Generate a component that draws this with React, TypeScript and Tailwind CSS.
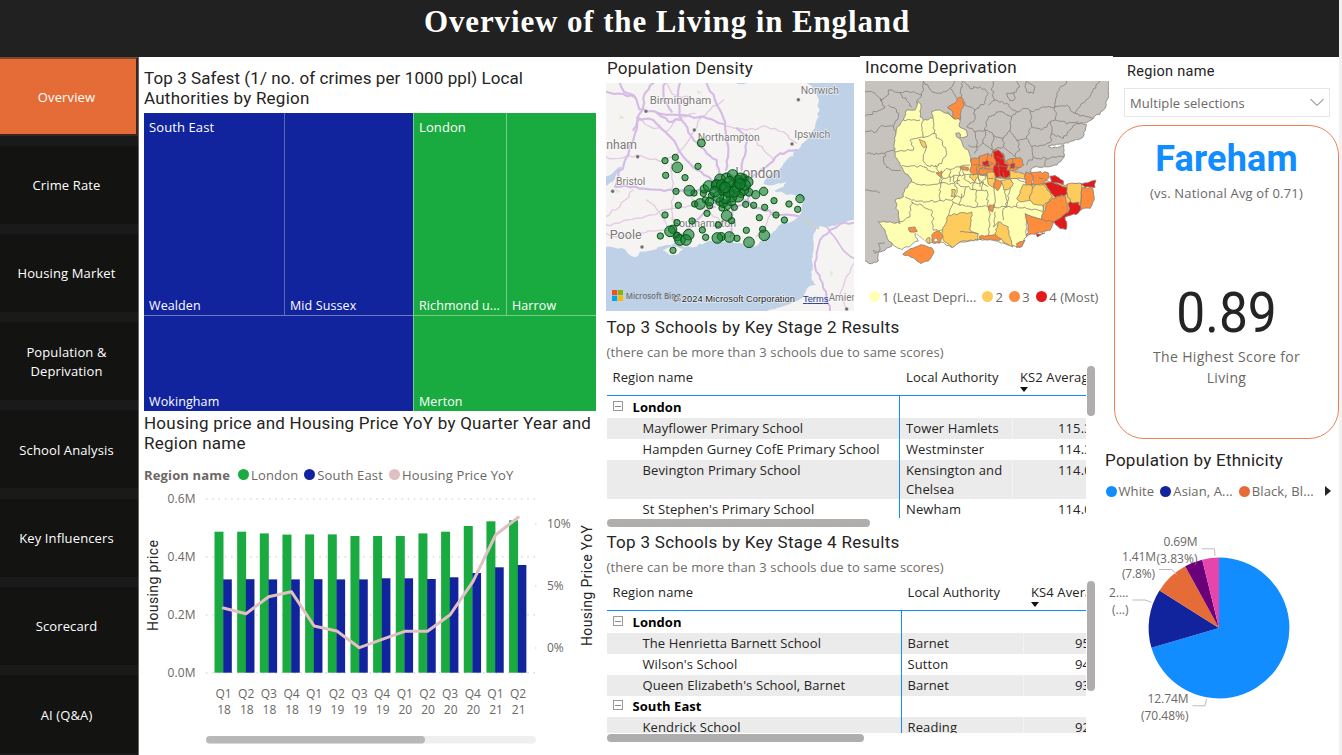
import React from "react";

const sans = "font-['Open_Sans','Noto_Sans',sans-serif]";
const din = "font-['Roboto','Open_Sans',sans-serif]";

/* ---------- irregular outlines ---------- */

type Pt = [number, number];

const parse = (s: string): Pt[] =>
  s.trim().split(/\s+/).map((p) => p.split(",").map(Number) as Pt);

const noise = (a: number, b: number, c: number) => {
  const v = Math.sin(a * 12.9898 + b * 78.233 + c * 37.719) * 43758.5453;
  return v - Math.floor(v) - 0.5;
};

// Subdivides each edge and shifts the new points, the same way in both directions,
// so that two areas with a common edge keep a common border.
function rough(s: string, closed: boolean, amp = 5.5, step = 8): string {
  const pts = parse(s);
  const out: Pt[] = [];
  const n = closed ? pts.length : pts.length - 1;
  for (let i = 0; i < n; i++) {
    const a = pts[i];
    const b = pts[(i + 1) % pts.length];
    const swap = a[0] > b[0] || (a[0] === b[0] && a[1] > b[1]);
    const [p, q] = swap ? [b, a] : [a, b];
    const len = Math.hypot(q[0] - p[0], q[1] - p[1]);
    const k = Math.max(1, Math.round(len / step));
    const seg: Pt[] = [];
    for (let j = 1; j < k; j++) {
      const t = j / k;
      seg.push([
        p[0] + (q[0] - p[0]) * t + noise(p[0] + j, q[1], p[1]) * amp,
        p[1] + (q[1] - p[1]) * t + noise(q[0], p[1] + j, q[1]) * amp,
      ]);
    }
    if (swap) seg.reverse();
    out.push(a, ...seg);
  }
  if (!closed) out.push(pts[pts.length - 1]);
  return "M" + out.map((p) => p[0].toFixed(1) + " " + p[1].toFixed(1)).join("L") + (closed ? "Z" : "");
}

/* ---------- sidebar ---------- */

const pages = [
  "Crime Rate",
  "Housing Market",
  "Population & Deprivation",
  "School Analysis",
  "Key Influencers",
  "Scorecard",
  "AI (Q&A)",
];

function Sidebar() {
  return (
    <nav className={`flex w-[139px] shrink-0 flex-col overflow-hidden border-r border-[#6b6763] bg-[#1a1a1a] text-[13px] leading-[19px] tracking-[0.13px] text-white ${sans}`}>
      <div className="flex h-[79px] shrink-0 items-center justify-center border-y-2 border-r-2 border-t-[#7a4730] border-r-[#3a261c] border-b-[#3a261c] bg-[#e66c37] pr-[3px] pt-[2px]">
        Overview
      </div>
      <div className="flex flex-col gap-[10.3px] pt-[9.5px]">
        {pages.map((p) => (
          <div key={p} className="flex h-[78px] shrink-0 items-center justify-center bg-[#131311] pl-4 pr-[21px] pt-[2px] text-center">
            {p}
          </div>
        ))}
      </div>
    </nav>
  );
}

/* ---------- treemap ---------- */

function Leaf({ name, group, className }: { name: string; group?: string; className: string }) {
  return (
    <div className={`flex flex-col justify-between whitespace-nowrap px-[5px] pt-[5px] ${className}`}>
      <span>{group}</span>
      <span className="text-[12.5px] leading-[18px]">{name}</span>
    </div>
  );
}

function Treemap() {
  return (
    <div className={`flex h-[298px] w-[453px] text-[13px] leading-[18px] tracking-[0.1px] text-white ${sans}`}>
      <div className="flex w-[269px] flex-col bg-[#12239e]">
        <div className="flex h-[203px] border-b border-[#7079bd]">
          <Leaf group="South East" name="Wealden" className="w-[141px] border-r border-[#5a65b8]" />
          <Leaf name="Mid Sussex" className="w-[128px]" />
        </div>
        <Leaf name="Wokingham" className="h-[95px]" />
      </div>
      <div className="flex w-[183px] flex-col border-l border-[#76cd8c] bg-[#1aab40]">
        <div className="flex h-[203px] border-b border-[#76cd8c]">
          <Leaf group="London" name="Richmond u..." className="w-[93px] border-r border-[#76cd8c]" />
          <Leaf name="Harrow" className="w-[89px]" />
        </div>
        <Leaf name="Merton" className="h-[95px]" />
      </div>
    </div>
  );
}

/* ---------- housing chart ---------- */

const quarters = ["Q1 18", "Q2 18", "Q3 18", "Q4 18", "Q1 19", "Q2 19", "Q3 19", "Q4 19", "Q1 20", "Q2 20", "Q3 20", "Q4 20", "Q1 21", "Q2 21"];
const londonTop = [531.7, 531.7, 533.4, 534.6, 534.4, 534.4, 536, 536, 536, 533.4, 531.7, 526, 521.3, 520.3];
const southTop = [579.4, 579.2, 579.4, 579.4, 579.2, 579.4, 579.4, 578.3, 578.3, 579, 577.3, 573, 567.3, 565];
const yoy = [608, 613.7, 596.7, 591.7, 626, 631, 647.7, 639.3, 631.3, 631.3, 614.7, 581.7, 535, 517.3];

function HousingChart() {
  return (
    <svg viewBox="144 488 456 258" className="block h-[258px] w-[456px]" fontFamily="'Open Sans','Noto Sans',sans-serif" fontSize="12" fill="#6b6865">
      {[498.8, 556.8, 614.8, 672.9].map((y, i) => (
        <g key={y}>
          <line x1="206" x2="535" y1={y} y2={y} stroke="#cfcfcf" strokeWidth="1.2" strokeDasharray="1.4 4.9" />
          <text x="195.5" y={y + 4.2} textAnchor="end" textLength="28">{["0.6M", "0.4M", "0.2M", "0.0M"][i]}</text>
        </g>
      ))}
      {[["10%", 524], ["5%", 586], ["0%", 648]].map(([t, y]) => (
        <g key={t}>
          <rect x="535" y={Number(y) - 0.5} width="1.5" height="1" fill="#cfcfcf" />
          <text x="547" y={Number(y) + 4}>{t}</text>
        </g>
      ))}
      {quarters.map((q, i) => {
        const x = 214.5 + i * 22.66;
        const [a, b] = q.split(" ");
        return (
          <g key={q}>
            <rect x={x} y={londonTop[i]} width="9" height={672.7 - londonTop[i]} fill="#1aab40" />
            <rect x={x + 8.7} y={southTop[i]} width="8.6" height={672.7 - southTop[i]} fill="#12239e" />
            <text x={x + 9} y="698" textAnchor="middle">{a}</text>
            <text x={x + 9.6} y="714" textAnchor="middle">{b}</text>
          </g>
        );
      })}
      <polyline
        points={yoy.map((y, i) => `${(223.3 + i * 22.69).toFixed(1)},${y}`).join(" ")}
        fill="none" stroke="#e0c0c3" strokeWidth="3" strokeLinejoin="round" strokeLinecap="round"
      />
      <g fontFamily="Roboto,sans-serif" fontSize="14" fill="#252423">
        <text transform="translate(157.5 631) rotate(-90)" textLength="91">Housing price</text>
        <text transform="translate(591.5 646) rotate(-90)" textLength="121">Housing Price YoY</text>
      </g>
      <rect x="206" y="736" width="330" height="7.5" rx="3.7" fill="#efefef" />
      <rect x="206" y="736" width="219" height="7.5" rx="3.7" fill="#b8b8b8" />
    </svg>
  );
}

function Dot({ className }: { className: string }) {
  return <i className={`-mt-[2px] block size-[11px] shrink-0 rounded-full ${className}`} />;
}

/* ---------- population density map ---------- */

const motorways = [
  "60,99 72,125 100,135 118,178 170,188 240,195 320,205 372,222",
  "18,125 70,132 105,142",
  "160,99 135,130 128,180 112,205 160,210 180,230 215,265 250,320 290,360 335,390 385,400",
  "118,205 95,280 75,330 55,380 45,410 90,412 150,418 240,422 330,425 400,420",
  "112,210 100,240",
  "195,99 190,150 215,185",
  "240,99 232,150 245,210 280,270 320,310 350,330 358,370",
  "320,99 345,150 365,190 375,230 385,290 378,360",
  "410,235 440,260 438,300 425,360",
  "170,188 205,215 240,210",
  "440,390 475,370 540,310 590,300",
  "345,470 320,480 290,510 260,540 220,560",
  "400,470 395,520 390,560",
  "430,450 480,475 530,495 600,500",
  "420,385 380,370 350,385 330,420 345,460 400,470 440,455 450,420 420,385",
];
const minorRoads = [
  "18,320 60,325 110,315 180,335 225,320 260,280 285,240",
  "285,240 300,205 330,180 370,150",
  "375,230 440,240 500,230 550,245 590,280",
  "215,340 220,400 215,480 225,520",
  "18,525 80,510 150,495 190,480 240,470 320,470",
  "18,550 60,560 120,550 190,540",
  "18,500 60,470 100,420",
  "140,450 180,490 215,540",
  "110,200 150,230 200,245 240,200 285,190",
  "520,330 500,310 450,250",
  "250,425 290,460 340,500 390,530",
  "470,560 500,520 520,480",
  "200,100 215,130 280,150",
];
const places: [string, number, number, number, number][] = [
  ["Birmingham", 149, 161, 185, 34], ["Norwich", 602, 131, 115, 32], ["Northampton", 293, 273, 186, 33],
  ["Ipswich", 583, 265, 108, 32], ["nham", 19, 298, 92, 36], ["Bristol", 48, 404, 88, 33],
  ["London", 406, 384, 135, 42], ["Southampton", 218, 530, 190, 33], ["Poole", 29, 568, 96, 36], ["Amiens", 686, 752, 100, 34],
];
const densities = parse(
  "304,279 226,322 195,332 197,376 255,383 294,349 228,424 235,466 195,495 231,518 276,513 282,429 321,490 284,462 329,467 307,540 317,562 181,558 219,601 355,525 439,541 411,565 488,538 478,503 528,495 553,510 593,478 567,462 522,452 494,472 461,466 437,463 403,472 366,474 395,512 316,450 310,430 334,437 230,555"
);
const denser = parse(
  "232,352 268,422 326,408 300,462 380,497 352,564 388,561 447,577 493,556 210,544 240,570 266,554 258,570 360,388 380,385 398,375 415,392 443,396 430,420 415,440 395,440 375,445 355,440 370,420 397,408 350,405 385,425 410,410 422,385 345,425 365,405 388,395 404,425 435,405 375,412 420,402"
);
const middling = parse("491,424 467,434 600,446 364,560 218,538 313,417 446,426 329,455 382,466 232,560 347,403 423,430 432,385 360,455 370,460 395,455");

function DensityMap() {
  return (
    <svg viewBox="18 99 744 684" preserveAspectRatio="none" className="block h-[228px] w-[248px]" fontFamily="Roboto,sans-serif">
      <rect x="18" y="99" width="744" height="684" fill="#bfd1e6" />
      <path
        d={rough("10,90 403,90 412,102 440,99 445,90 620,90 640,115 655,145 656,200 645,235 625,265 605,282 592,300 560,330 545,352 520,365 500,385 490,400 520,405 560,395 550,412 520,420 560,435 600,440 613,452 603,490 575,515 545,520 520,545 490,570 465,590 430,582 390,574 330,572 290,590 255,592 235,575 205,585 175,590 160,600 120,605 105,622 85,612 75,598 40,592 10,590", true, 9, 12)}
        fill="#f6f4f2"
      />
      <path d={rough("10,385 35,372 55,352 68,346 50,372 38,395 10,412", true, 4)} fill="#bfd1e6" />
      <path d={rough("188,600 215,588 250,596 235,612 212,616", true, 3)} fill="#f6f4f2" />
      <path d={rough("770,505 730,520 690,530 655,530 640,555 638,620 635,690 650,705 625,712 605,745 560,765 500,783 500,790 770,790", true, 6)} fill="#f6f4f2" />
      {["60,195 75,205 58,208", "290,120 310,128 292,132", "640,735 655,742 645,750", "210,500 235,510 215,515", "345,545 380,550 350,555", "690,660 700,670 692,680", "45,415 62,425 50,428"].map((p) => (
        <polygon key={p} points={p} fill="#dcebd2" />
      ))}
      <g fill="none" strokeLinejoin="round" strokeLinecap="round">
        {minorRoads.map((r) => <path key={r} d={rough(r, false, 10, 14)} stroke="#e3cbe2" strokeWidth="4" />)}
        {motorways.map((r) => <path key={r} d={rough(r, false, 9, 14)} stroke="#d5bce6" strokeWidth="6.5" />)}
        <path d={rough("762,518 720,522 690,540 660,570 650,610 645,650 668,700 690,783", false, 6, 14)} stroke="#d5bce6" strokeWidth="6" />
        <path d={rough("680,530 710,570 740,610 762,625", false, 6, 14)} stroke="#d5bce6" strokeWidth="5" />
        <path d={rough("762,640 735,690 720,740 740,783", false, 6, 14)} stroke="#e3cbe2" strokeWidth="4" />
        <path d="M600 500L655 535" stroke="#cfcfcf" strokeWidth="6" />
      </g>
      {parse("138,184 595,149 283,240 576,282 113,320 38,424 126,591 740,777").map(([x, y]) => (
        <circle key={x} cx={x} cy={y} r="6" fill="#6f6f6f" stroke="#fff" strokeWidth="1.5" />
      ))}
      {places.map(([t, x, y, w, s]) => (
        <text key={t} x={x} y={y} fontSize={s} textLength={w} lengthAdjust="spacingAndGlyphs" fill="#7d7a7a" stroke="#fff" strokeWidth="4" strokeOpacity=".7" paintOrder="stroke">{t}</text>
      ))}
      <g fill="#107c30" fillOpacity=".62" stroke="#05540f" strokeWidth="3">
        {densities.map(([x, y], i) => <circle key={i} cx={x} cy={y} r={i === 0 ? 12 : 9.5} />)}
        {middling.map(([x, y], i) => <circle key={i} cx={x} cy={y} r="12.5" />)}
        {denser.map(([x, y], i) => <circle key={i} cx={x} cy={y} r="16" />)}
      </g>
      <rect x="36" y="720" width="15.5" height="15.5" fill="#f25022" />
      <rect x="53.5" y="720" width="15.5" height="15.5" fill="#7fba00" />
      <rect x="36" y="737.5" width="15.5" height="15.5" fill="#00a4ef" />
      <rect x="53.5" y="737.5" width="15.5" height="15.5" fill="#ffb900" />
      <text x="77" y="747" fontSize="28" textLength="165" lengthAdjust="spacingAndGlyphs" fill="#737373" fontFamily="'Open Sans',sans-serif" fontWeight="600">Microsoft Bing</text>
      <g fontFamily="'Liberation Sans',sans-serif" fontSize="28">
        <text x="217" y="756" textLength="368" fill="#1b1b1b" stroke="#fff" strokeOpacity=".6" strokeWidth="4" paintOrder="stroke">© 2024 Microsoft Corporation</text>
        <text x="609" y="756" textLength="76" fill="#23378f" textDecoration="underline">Terms</text>
      </g>
    </svg>
  );
}

/* ---------- income deprivation map ---------- */

const greyBorders = [
  "15,200 50,185 75,170 60,150 85,135 85,120 120,128 160,125 185,135 190,93",
  "15,125 45,130 65,155", "85,165 110,180 115,200 100,230 108,250", "15,245 50,245 60,230 100,230",
  "20,310 75,310 103,300", "75,310 72,340 95,360 122,360", "120,128 155,170", "185,135 170,160",
  "190,93 215,125 245,130 270,115 285,93", "270,115 290,145",
  "310,93 300,130 315,165 345,180 375,160 385,130 360,110 330,115 310,93",
  "395,115 400,93", "395,115 405,150 385,165", "405,150 440,160 470,185 500,175 520,185 550,170 585,170",
  "440,130 460,128 466,145 450,152 440,130", "500,93 525,110 520,130 500,125 495,110 500,93",
  "585,170 590,130 620,93", "470,93 480,110 460,128",
  "345,180 340,215 320,230 345,245 375,240 385,200 420,185 455,200 470,185",
  "455,200 450,240 430,265 400,255 375,240", "510,180 515,230 545,240 570,215 585,210 585,170",
  "585,170 620,165 645,190 700,205", "645,190 660,170 690,140 720,93", "570,215 575,250 610,265 650,220",
  "585,210 620,222 655,215", "515,230 500,265 470,270 450,240", "500,265 515,290 550,285 575,270 575,250",
  "470,270 480,300 465,320 490,345", "515,290 520,320 500,345", "520,320 560,325 612,320",
  "375,240 370,280 350,290 345,310", "350,290 325,285", "370,280 400,300 430,290 465,320", "430,265 430,290",
  "400,255 395,300", "345,245 350,270 350,290", "560,325 555,348",
  "15,420 60,425", "45,605 60,600 55,580 75,575",
];
const yellowBorders = [
  "130,210 180,210", "190,210 185,240 190,262 150,270 160,300 105,305", "220,205 222,250 190,262", "262,185 275,200",
  "222,250 248,275 260,310 245,340 225,350 200,345 190,320 200,290", "125,345 190,350 225,365", "225,345 240,370 250,385 245,400",
  "240,385 240,450", "155,395 200,405 240,398 275,400 300,390", "240,450 200,455 155,450 135,440",
  "240,450 275,450 290,430 285,400", "155,455 150,500 120,515", "155,455 215,480 220,540 250,540", "275,450 300,465 350,470 390,470",
  "265,495 280,455", "300,375 290,400 320,410 310,440 285,440", "320,410 350,420 350,470", "350,420 380,420 385,470",
  "330,400 370,395 385,410", "385,470 390,520 385,555", "402,412 405,470 390,470", "435,420 440,470 402,470", "405,485 400,530 415,515",
  "440,470 470,470 475,455", "430,475 430,510", "440,470 430,475", "470,470 500,475 550,485", "330,345 300,350 260,355 245,370",
  "310,385 330,400", "300,350 300,375 330,372", "270,360 270,395", "350,370 365,395 385,375", "250,385 300,375", "345,395 340,420", "355,380 360,410",
  "360,375 400,370", "280,375 285,400", "310,360 315,385", "365,395 365,420", "300,465 305,430", "455,390 450,420 440,470",
];
const regions: [string, string][] = [
  ["262,172 285,160 292,145 305,143 312,165 303,185 302,208 280,205 275,180", "o"],
  ["178,268 195,275 200,290 190,292", "s"],
  ["335,325 355,325 358,318 385,310 395,320 400,300 410,298 430,310 435,335 460,325 480,322 490,345 478,352 455,362 450,385 420,385 402,378 400,358 365,352 360,370 345,375 330,365", "o"],
  ["360,354 400,358 402,368 380,372 358,372", "o"],
  ["398,303 415,300 430,315 433,340 445,345 440,360 455,365 440,382 405,380 400,355 408,335", "r"],
  ["368,335 380,330 390,348 372,348", "r"], ["450,342 465,340 462,355 450,356", "r"],
  ["380,368 402,366 405,385 402,412 385,402", "s"], ["448,362 490,370 495,375 498,388 465,385 448,385", "s"],
  ["422,390 452,388 460,400 445,418 432,420", "s"], ["332,372 355,375 345,395 328,380", "s"],
  ["405,385 425,398 412,422 402,412", "o"],
  ["515,402 555,390 600,405 665,400 665,478 615,500 582,515 545,508 550,468 520,452", "s"],
  ["498,365 520,375 515,402 498,408 495,375", "o"],
  ["510,365 565,368 568,380 555,390 553,402 515,404 520,380", "o"],
  ["570,378 585,376 610,392 610,402 575,398", "r"],
  ["490,402 515,405 520,425 508,440 520,452 480,455 470,445 480,430", "s"],
  ["525,405 550,402 570,425 578,440 550,468 520,462 508,440", "s"],
  ["545,495 560,462 578,445 615,435 622,460 625,480 615,498 582,515 562,515 545,508", "o"],
  ["553,400 575,395 600,405 622,412 620,432 585,442 570,422", "r"],
  ["622,402 665,400 665,420 662,458 640,460 622,440", "s"],
  ["665,402 690,395 708,390 705,412 675,412", "r"],
  ["665,412 698,415 702,450 690,475 662,478 662,458", "o"],
  ["625,458 655,455 662,478 655,488 615,500 620,515 618,538 600,535 582,515 610,495 628,480", "r"],
  ["495,490 545,508 582,515 570,540 530,548 500,558 505,530", "o"],
  ["528,550 555,548 532,560", "r"], ["470,580 495,570 485,590 470,592", "o"],
  ["265,495 335,485 330,540 355,550 355,568 300,575 278,592 250,570 248,540", "s"],
  ["358,558 420,550 422,568 360,568", "o"],
  ["415,515 445,530 450,560 458,590 430,575 405,550", "s"],
  ["228,368 245,362 245,385", "o"], ["275,418 285,418 285,440 273,438", "s"],
  ["388,464 402,462 398,485 388,480", "o"], ["302,350 325,352 325,360 305,358", "o"],
  ["145,533 165,530 172,543 150,545", "o"], ["215,555 235,542 250,558 240,578 218,578", "o"], ["198,570 210,562 210,580", "s"],
  ["128,612 150,595 182,583 215,592 222,605 205,632 182,640 160,622", "o"],
];
const shade: Record<string, string> = { o: "#fd8d3c", s: "#fecc5c", r: "#e31a1c" };

function IncomeMap() {
  return (
    <svg viewBox="15 93 732 560" preserveAspectRatio="none" className="block h-[187px] w-[244px]">
      <g stroke="#857f76" strokeWidth="2.4" strokeLinejoin="round">
        <path
          d={rough("10,88 750,88 746,135 735,175 700,205 680,218 650,220 680,224 676,242 668,262 640,272 600,282 565,288 575,294 612,286 612,322 590,345 560,350 520,352 512,362 480,380 200,400 110,520 95,588 75,600 55,605 55,632 35,640 10,632", true)}
          fill="#c6c2bd"
        />
        {greyBorders.map((p) => <path key={p} d={rough(p, false, 8)} fill="none" />)}
        <path
          d={rough("175,155 183,165 180,200 190,210 218,205 215,185 240,180 262,190 275,200 300,210 298,230 318,240 322,258 300,262 298,248 287,250 290,260 302,268 310,290 325,300 332,325 335,345 350,370 400,380 470,385 500,400 510,450 550,468 552,490 545,508 497,492 500,560 480,592 450,585 400,570 360,567 300,575 275,592 245,575 200,578 165,550 175,572 125,598 100,585 82,565 75,540 55,514 75,515 120,520 115,495 105,450 130,440 135,415 155,395 125,350 105,320 103,280 112,230 130,210 140,180 165,180", true)}
          fill="#ffffb2"
        />
        {yellowBorders.map((p) => <path key={p} d={rough(p, false, 8)} fill="none" />)}
        {regions.map(([p, c]) => <path key={p} d={rough(p, true)} fill={shade[c]} />)}
        {["340,345 370,345 400,340", "358,318 355,350", "385,310 380,330 400,340", "410,320 432,325", "405,345 440,350", "415,335 420,382", "435,335 445,345 478,352", "430,365 432,382", "350,350 352,372", "300,545 350,550", "458,325 455,345", "535,382 550,385", "385,385 400,385"].map((p) => (
          <path key={p} d={rough(p, false, 6)} fill="none" />
        ))}
        <path d="M220 570l8 -8 6 8 -6 6zM40 600l8 4 -4 6z" fill="#fff" />
      </g>
      <path d="M165 548L205 582L200 588L172 560Z" fill="#fff" />
    </svg>
  );
}

/* ---------- school tables ---------- */

type Row = { name: string; authority?: string; score?: string; tall?: boolean; group?: boolean };

const ks2: Row[] = [
  { name: "London", group: true },
  { name: "Mayflower Primary School", authority: "Tower Hamlets", score: "115.33" },
  { name: "Hampden Gurney CofE Primary School", authority: "Westminster", score: "114.33" },
  { name: "Bevington Primary School", authority: "Kensington and Chelsea", score: "114.00", tall: true },
  { name: "St Stephen's Primary School", authority: "Newham", score: "114.00" },
];
const ks4: Row[] = [
  { name: "London", group: true },
  { name: "The Henrietta Barnett School", authority: "Barnet", score: "95.10" },
  { name: "Wilson's School", authority: "Sutton", score: "94.20" },
  { name: "Queen Elizabeth's School, Barnet", authority: "Barnet", score: "93.30" },
  { name: "South East", group: true },
  { name: "Kendrick School", authority: "Reading", score: "92.40" },
];

function Schools({ stage, rows, wide }: { stage: 2 | 4; rows: Row[]; wide?: boolean }) {
  const first = wide ? "w-[295px]" : "w-[293.5px]";
  const second = wide ? "w-[122.5px]" : "w-[113px]";
  return (
    <section className="flex h-[215px] w-[490px] flex-col pl-[0.5px]">
      <h2 className={`h-[25px] text-[17px] leading-[24px] tracking-[0.3px] text-[#252423] ${din}`}>Top 3 Schools by Key Stage {stage} Results</h2>
      <p className={`h-[26px] text-[13px] leading-[24px] tracking-[0.11px] text-[#706d6a] ${sans}`}>(there can be more than 3 schools due to same scores)</p>
      <div className="flex h-[152px] gap-px">
        <div className={`w-[479px] overflow-hidden whitespace-nowrap text-[13px] leading-[19px] tracking-[0.11px] text-[#252423] ${sans}`}>
          <div className="flex h-[30px] w-[600px] border-b border-[#118dff]">
            <div className={`${first} pl-[6px] pt-[2px]`}>Region name</div>
            <div className={`${second} pl-[6px] pt-[2px]`}>Local Authority</div>
            <div className="relative pl-[7px] pt-[2px]">
              KS{stage} Average Score
              <i className="absolute left-[7px] top-[21px] border-x-[4.5px] border-t-[5px] border-x-transparent border-t-[#111]" />
            </div>
          </div>
          {rows.map((r, i) => (
            <div key={r.name} className={`flex w-[600px] ${i % 2 ? "bg-[#ebebeb]" : "bg-white"} ${r.tall ? "h-[39px]" : i === 0 ? "h-[22px]" : "h-[21px]"}`}>
              <div className={`${first} flex items-start border-r border-[#118dff] ${i === 0 ? "pt-[2px]" : "pt-px"}`}>
                {r.group ? (
                  <>
                    <i className="ml-[6px] mr-[10px] mt-[3px] flex size-[10px] items-center justify-center border border-[#999]">
                      <i className="h-px w-[6px] bg-[#888]" />
                    </i>
                    <b className="tracking-[0.05px] text-black">{r.name}</b>
                  </>
                ) : (
                  <span className="pl-[36px]">{r.name}</span>
                )}
              </div>
              <div className={`${second} whitespace-normal border-r border-white/40 pl-[6px] pt-px`}>{r.authority}</div>
              <div className={wide ? "pl-[51px] pt-px" : "pl-[45px] pt-px"}>{r.score}</div>
            </div>
          ))}
        </div>
        <div className={`w-[8px] rounded-full bg-[#b0aead] ${stage === 2 ? "h-[50px]" : "h-[110px]"}`} />
      </div>
      <div className={`mt-px h-[8px] rounded-full bg-[#b0aead] ${stage === 2 ? "w-[263px]" : "w-[257px]"}`} />
    </section>
  );
}

/* ---------- ethnicity pie ---------- */

const slices: [number, number, string][] = [
  [0, 253.7, "#118dff"], [253.7, 302.3, "#12239e"], [302.3, 331.3, "#e66c37"], [331.3, 346.2, "#6b007b"], [346.2, 360, "#e645ab"],
];

function Pie() {
  const at = (deg: number) => {
    const t = (deg * Math.PI) / 180;
    return `${(1219 + 70.4 * Math.sin(t)).toFixed(2)} ${(628 - 70.4 * Math.cos(t)).toFixed(2)}`;
  };
  return (
    <svg viewBox="1105 520 230 215" className="block h-[215px] w-[230px]" fontFamily="'Open Sans','Noto Sans',sans-serif" fontSize="12" fill="#6b6865">
      {slices.map(([a, b, c]) => (
        <path key={c} d={`M1219 628L${at(a)}A70.4 70.4 0 ${b - a > 180 ? 1 : 0} 1 ${at(b)}Z`} fill={c} />
      ))}
      <g fill="none" stroke="#bdbbb9">
        <polyline points="1202,548.8 1214.5,548.8 1215,556" />
        <polyline points="1159,569.5 1172,569.5 1176.5,574.5" />
        <polyline points="1132.5,600 1145,600 1151.5,602.3" />
        <polyline points="1192.5,705.8 1205,705.8 1206.5,699" />
      </g>
      <g textAnchor="end">
        <text x="1197.5" y="546" textLength="34">0.69M</text>
        <text x="1197.5" y="563" textLength="41">(3.83%)</text>
        <text x="1156" y="561" textLength="34">1.41M</text>
        <text x="1155" y="578" textLength="33">(7.8%)</text>
        <text x="1128.5" y="597">2....</text>
        <text x="1128.5" y="614">(...)</text>
        <text x="1188.5" y="703" textLength="41">12.74M</text>
        <text x="1188.5" y="720" textLength="47.5">(70.48%)</text>
      </g>
    </svg>
  );
}

/* ---------- page ---------- */

export default function App() {
  return (
    <div className="flex h-[755px] w-[1342px] overflow-hidden bg-white">
      <div className="flex w-[1339px] shrink-0 flex-col">
        <header className="flex h-[57px] shrink-0 justify-center bg-[#212121] pr-[5px] pt-[3px]">
          <h1 className="font-['Georgia','Liberation_Serif',serif] text-[31px] font-bold leading-[38px] tracking-[0.87px] text-white">
            Overview of the Living in England
          </h1>
        </header>
        <div className="flex min-h-0 flex-1">
          <Sidebar />
          <main className="flex min-w-0 flex-1 pl-[5px]">
            <div className="flex w-[462px] shrink-0 flex-col">
              <h2 className={`h-[56px] whitespace-nowrap pt-[11px] text-[17px] leading-5 tracking-[0.09px] text-[#252423] ${din}`}>
                Top 3 Safest (1/ no. of crimes per 1000 ppl) Local<br />
                <span className="tracking-[0.24px]">Authorities by Region</span>
              </h2>
              <Treemap />
              <h2 className={`h-[45px] whitespace-nowrap pt-[2px] text-[17px] leading-5 tracking-[0.24px] text-[#252423] ${din}`}>
                Housing price and Housing Price YoY by Quarter Year and<br />
                Region name
              </h2>
              <div className={`flex h-[32px] items-center whitespace-nowrap pt-[7px] text-[13px] tracking-[0.15px] text-[#6b6865] ${sans}`}>
                <b className="mr-[8px] font-bold tracking-[0.15px]">Region name</b>
                <Dot className="mr-[2px] bg-[#1aab40]" />London
                <Dot className="ml-[6px] mr-[2px] bg-[#12239e]" />South East
                <Dot className="ml-[6px] mr-[2px] bg-[#e0c0c3]" />Housing Price YoY
              </div>
              <HousingChart />
            </div>

            <div className="flex w-[499px] shrink-0 flex-col">
              <div className="flex h-[258px] w-[508px]">
                <div className="w-[254px] shrink-0">
                  <h2 className={`h-[26px] pl-px pt-px text-[17px] leading-[21px] tracking-[0.24px] text-[#252423] ${din}`}>Population Density</h2>
                  <DensityMap />
                </div>
                <div className="-mt-px w-[253px] shrink-0 bg-white pl-[5px]">
                  <h2 className={`h-[25px] pt-px text-[17px] leading-[21px] tracking-[0.3px] text-[#252423] ${din}`}>Income Deprivation</h2>
                  <IncomeMap />
                  <div className={`mt-[20px] flex items-center whitespace-nowrap pl-[4px] text-[13px] leading-[18px] tracking-[0.04px] text-[#6b6865] ${sans}`}>
                    <Dot className="mr-[2px] bg-[#ffffb2]" />1 (Least Depri...
                    <Dot className="ml-[6px] mr-[2px] bg-[#fecc5c]" />2
                    <Dot className="ml-[6px] mr-[2.5px] bg-[#fd8d3c]" />3
                    <Dot className="ml-[6px] mr-[2.5px] bg-[#e31a1c]" />4 (Most)
                  </div>
                </div>
              </div>
              <Schools stage={2} rows={ks2} />
              <Schools stage={4} rows={ks4} wide />
            </div>

            <aside className="flex w-[234px] shrink-0 flex-col">
              <div className="flex flex-col pl-[19px] pt-[5px]">
                <h3 className={`pl-[3px] text-[14.5px] leading-5 tracking-[0.3px] text-[#252423] ${din}`}>Region name</h3>
                <div className={`mt-[6px] flex h-[29px] w-[206px] items-center justify-between border border-[#e6e6e6] pl-[5px] pr-[5px] pt-[3px] text-[13px] tracking-[0.1px] text-[#6b6865] ${sans}`}>
                  Multiple selections
                  <svg viewBox="0 0 14 9" className="-mt-[4px] h-[9px] w-[14px]" fill="none" stroke="#6b6865">
                    <path d="M0.5 1L7 7.5L13.5 1" />
                  </svg>
                </div>
              </div>
              <div className={`ml-[9px] mt-[8px] flex h-[314px] w-[225px] flex-col items-center rounded-[30px] border border-[#ea8158] text-[#6b6865] ${sans}`}>
                <div className={`mt-[11px] text-[36px] font-bold leading-[44px] tracking-[0.2px] text-[#118dff] ${din}`}>Fareham</div>
                <div className="mt-[2px] text-[13px] leading-5 tracking-[0.18px]">(vs. National Avg of 0.71)</div>
                <div className={`mt-[80px] scale-x-92 text-[56px] leading-[60px] text-[#252423] ${din}`}>0.89</div>
                <div className="mt-[3px] w-[170px] text-center text-[14px] leading-[21px] tracking-[0.34px]">The Highest Score for Living</div>
              </div>
              <h2 className={`mt-[9px] whitespace-nowrap text-[17px] leading-[24px] tracking-[0.26px] text-[#252423] ${din}`}>Population by Ethnicity</h2>
              <div className={`mt-[10px] flex h-[20px] items-center whitespace-nowrap text-[13px] tracking-[0.12px] text-[#6b6865] ${sans}`}>
                <Dot className="ml-[0.5px] mr-[2px] bg-[#118dff]" />White
                <Dot className="ml-[6px] mr-[2px] bg-[#12239e]" />Asian, A...
                <Dot className="ml-[6px] mr-[2px] bg-[#e66c37]" />Black, Bl...
                <i className="-mt-[3px] ml-[11px] border-y-[5.5px] border-l-[6px] border-y-transparent border-l-[#252423]" />
              </div>
              <div className="mt-[18px]"><Pie /></div>
            </aside>
          </main>
        </div>
      </div>
      <div className="h-full w-[3px] bg-[#f1f1f1]" />
    </div>
  );
}
